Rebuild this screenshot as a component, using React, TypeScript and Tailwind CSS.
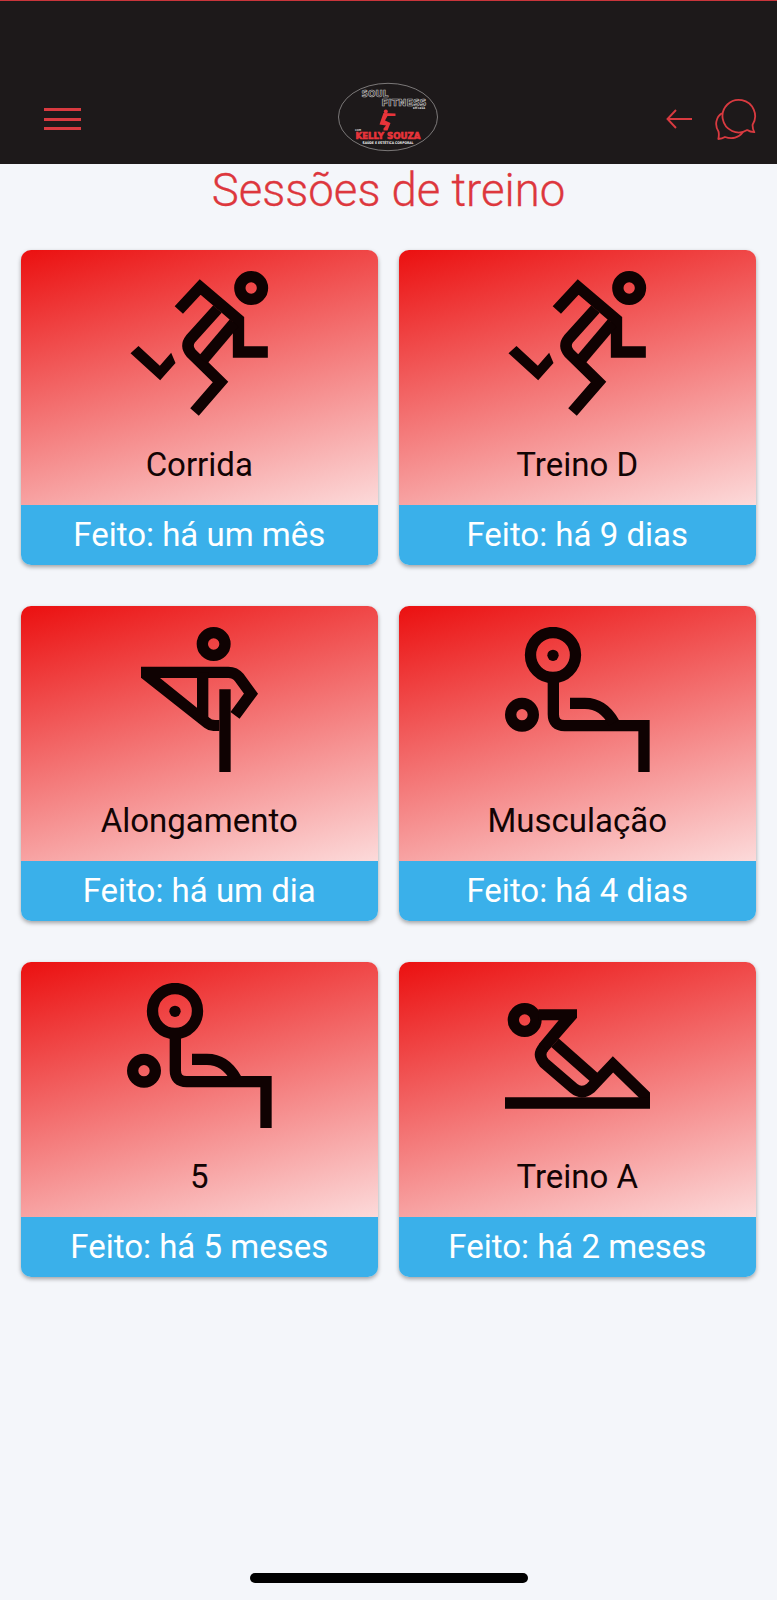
import type { ReactNode } from "react";

const INK = "#0f0202";

function Pictogram({ viewBox, children }: { viewBox: string; children: ReactNode }) {
  return (
    <svg className="h-[145px] w-[145px]" viewBox={viewBox} fill="none" stroke={INK} strokeWidth="34" strokeMiterlimit="10">
      {children}
    </svg>
  );
}

function RunIcon() {
  return (
    <Pictogram viewBox="52.5 60 435 435">
      <circle cx="425" cy="111" r="34" />
      {/* arms */}
      <path d="M208 177L272 108L387 206V303H475" />
      {/* torso and front leg */}
      <path d="M324 174L243 264Q227 284 245 307L333 393L255 483" />
      <path d="M374 216L280 327" />
      {/* back leg */}
      <path d="M63 307L87 285L151 344L185 305L198 336L152 388Z" fill={INK} stroke="none" />
    </Pictogram>
  );
}

function StretchIcon() {
  return (
    <Pictogram viewBox="21 48 435 435">
      <circle cx="281" cy="99" r="34" />
      <path d="M63 184H325Q345 184 358 200L393 248L345 313" />
      <path d="M63 168H120V201L268 320Q275 327 285 327H298V360H280Q266 360 253 350L63 200Z" fill={INK} stroke="none" />
      <path d="M248 184V325M315 235V483" />
    </Pictogram>
  );
}

function BenchIcon() {
  return (
    <Pictogram viewBox="45 48 435 435">
      <circle cx="189" cy="132" r="67.5" />
      <circle cx="189" cy="133" r="17" fill={INK} stroke="none" />
      <circle cx="96" cy="311" r="34" />
      <path d="M190 210V310Q190 344 224 344H462V483" />
      <path d="M240 277H285Q340 277 372 335" />
    </Pictogram>
  );
}

function SitUpIcon() {
  return (
    <Pictogram viewBox="45 66 435 435">
      <circle cx="104" cy="177" r="34" />
      <path d="M145 145H261V170L172 272L146 250L206 178H145Z" fill={INK} stroke="none" />
      <path d="M161 259Q142 281 162 305L251 382Q275 402 302 381L369 310L490 428" />
      <path d="M195 245L312 349" />
      <path d="M45 426H480" />
    </Pictogram>
  );
}

function Logo() {
  return (
    <svg className="h-[70px] w-[102px]" viewBox="0 0 102 70" fontFamily="DejaVu Sans, sans-serif" fontWeight="700">
      <ellipse cx="51" cy="35" rx="49.5" ry="33.7" fill="none" stroke="#a3a0a1" strokeWidth="0.7" />
      <g fill="#1d191a" stroke="#bdbdbd" strokeWidth="0.6" fontSize="8.8">
        <text x="24.5" y="15" textLength="27" lengthAdjust="spacingAndGlyphs">SOUL</text>
        <text x="44.5" y="23.5" textLength="45" lengthAdjust="spacingAndGlyphs">FITNESS</text>
      </g>
      <text x="76" y="27.2" fill="#ddd" fontSize="2.8" textLength="12" lengthAdjust="spacingAndGlyphs">EM CASA</text>
      {/* squatting figure */}
      <circle cx="48.8" cy="29.5" r="2" fill="#e8343a" />
      <path d="M46.5 31L44 38L42.5 42.5L49 43.5L46.5 46.5V48.5H50.5L53.5 41L48 38.5L50.5 34H58.5V31.5Z" fill="#e8343a" />
      <text x="18" y="49" fill="#ddd" fontSize="2.8" textLength="6" lengthAdjust="spacingAndGlyphs">COM</text>
      <text x="18.5" y="56.5" fill="#e8343a" stroke="#e8343a" strokeWidth="0.6" fontSize="8.4" textLength="65" lengthAdjust="spacingAndGlyphs">KELLY SOUZA</text>
      <text x="25.5" y="61.8" fill="#eee" fontSize="3.6" textLength="51" lengthAdjust="spacingAndGlyphs">SAÚDE E ESTÉTICA CORPORAL</text>
    </svg>
  );
}

function Header() {
  return (
    <header className="grid h-[164.4px] grid-cols-[1fr_102px_1fr] items-end border-t border-[#c9353b] bg-[#1d191a] pr-[20.5px] pl-[20px]">
      <button aria-label="Menu" className="mb-[34.4px] ml-[24px] flex h-[22px] w-[37px] flex-col justify-between">
        <span className="h-[3px] w-[37px] bg-[#d93a40]" />
        <span className="h-[3px] w-[37px] bg-[#d93a40]" />
        <span className="h-[3px] w-[37px] bg-[#d93a40]" />
      </button>
      <div className="mb-[12.4px]">
        <Logo />
      </div>
      <div className="mb-[24.4px] flex items-center gap-[22px] justify-self-end text-[#d93a40]">
        <svg className="h-[22px] w-[27px]" viewBox="0 0 27 22" fill="none" stroke="currentColor" strokeWidth="1.9">
          <path d="M26 11H2M10 2L1.5 11L10 20" />
        </svg>
        <svg className="h-[42px] w-[42px]" viewBox="0 0 42 42" fill="none" stroke="currentColor" strokeWidth="1.8" strokeLinejoin="round">
          <path d="M39.3 34.1Q35 34.1 32.2 32.1A16.3 16.3 0 1 1 37.6 26.8Q37.4 30.8 39.3 34.1Z" />
          <path d="M7 15.3C1 18.8-.7 27.3 3.5 33.5Q4.3 37.3 3.3 41Q7 40.9 10 39C17 41.6 24 39.8 28 34.1" />
        </svg>
      </div>
    </header>
  );
}

const sessions = [
  { name: "Corrida", done: "Feito: há um mês", icon: <RunIcon /> },
  { name: "Treino D", done: "Feito: há 9 dias", icon: <RunIcon /> },
  { name: "Alongamento", done: "Feito: há um dia", icon: <StretchIcon /> },
  { name: "Musculação", done: "Feito: há 4 dias", icon: <BenchIcon /> },
  { name: "5", done: "Feito: há 5 meses", icon: <BenchIcon /> },
  { name: "Treino A", done: "Feito: há 2 meses", icon: <SitUpIcon /> },
];

export default function App() {
  return (
    <div className="flex h-[1600px] w-[777px] flex-col bg-[#f4f6fa] font-['Roboto',sans-serif]">
      <Header />
      <h1 className="h-[85.5px] text-center text-[45.5px] leading-[54px] font-light text-[#dd373d] [-webkit-text-stroke:0.3px_#dd373d]">
        Sessões de treino
      </h1>
      <main className="grid grid-cols-2 gap-x-[20.5px] gap-y-[41.3px] pr-[21px] pl-[20.5px]">
        {sessions.map((s) => (
          <section
            key={s.name}
            className="flex h-[314.7px] flex-col overflow-hidden rounded-[10px] shadow-[0_2px_4px_rgba(0,0,0,0.35)]"
          >
            <div className="flex h-[254.7px] flex-col items-center bg-[linear-gradient(165deg,#eb1010,#fcdada)] pt-[20.8px]">
              {s.icon}
              <h2 className="mt-[29px] text-[33px] leading-[40px] text-[#120404]">{s.name}</h2>
            </div>
            <p className="h-[60px] bg-[#3ab0ea] text-center text-[33px] leading-[60px] text-white">{s.done}</p>
          </section>
        ))}
      </main>
      <div className="mx-auto mt-auto mb-[17px] h-[10px] w-[278px] rounded-full bg-black" />
    </div>
  );
}
